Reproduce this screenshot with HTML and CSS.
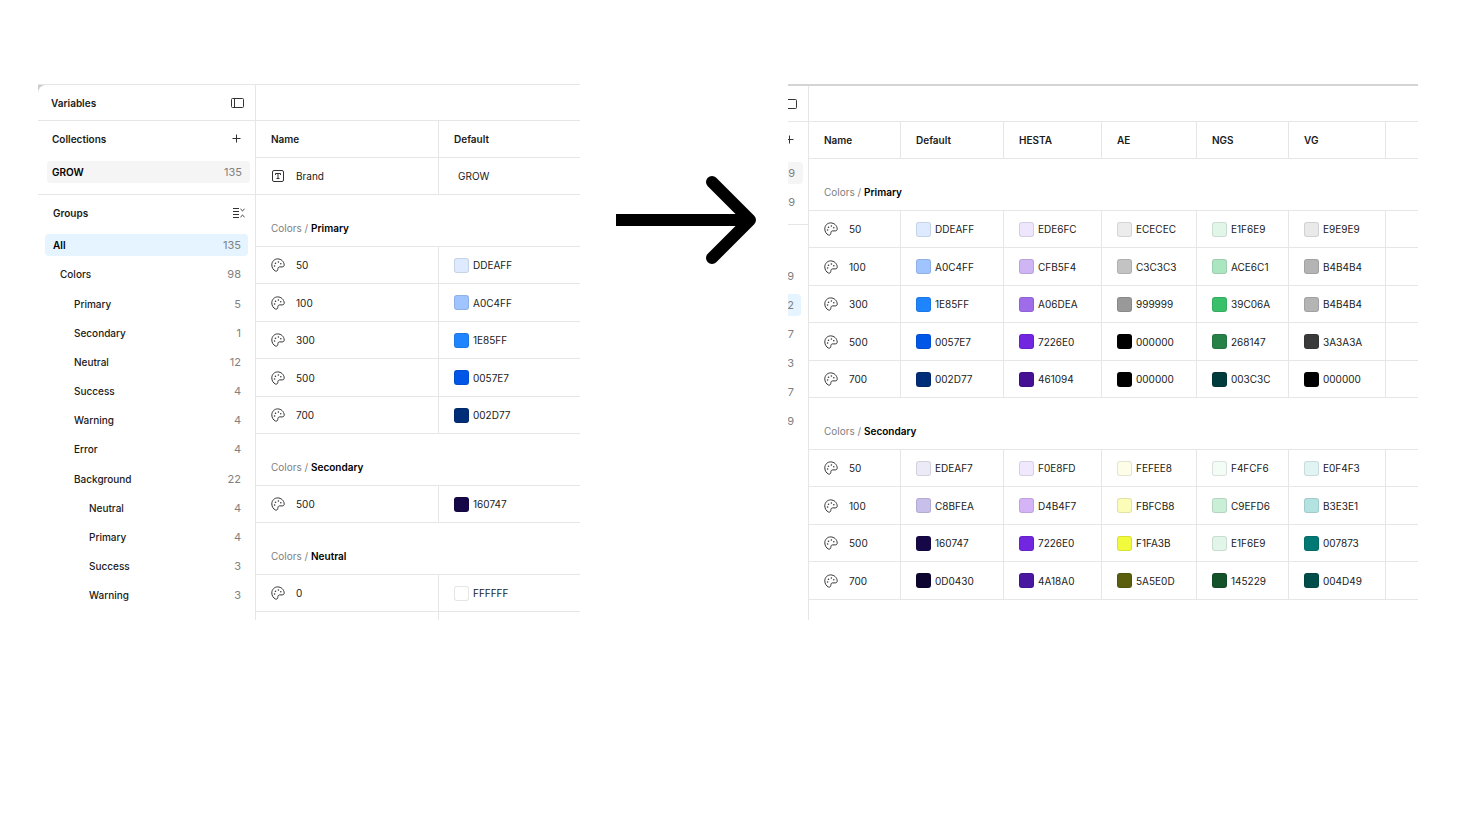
FILE: index.html
```
<!DOCTYPE html>
<html lang="en">
  <head>
    <meta charset="UTF-8" />
    <meta name="viewport" content="width=device-width, initial-scale=1.0" />
    <title>Variables</title>
    <link rel="stylesheet" href="styles.css">
  </head>
  <body>
    <!-- Shared icons -->
    <svg class="sprite" aria-hidden="true">
      <symbol id="icon-panel" viewBox="0 0 13 10">
        <rect x="0.5" y="0.5" width="12" height="9" rx="1" />
        <path d="M3.5 0.5v9" />
      </symbol>
      <symbol id="icon-plus" viewBox="0 0 9 9">
        <path d="M4.5 0.5v8M0.5 4.5h8" />
      </symbol>
      <symbol id="icon-collapse" viewBox="0 0 12 10">
        <path d="M0 0.5h6M0 3.5h6M0 6.5h6M0 9.5h6M7.5 1l2 1.8 2-1.8M7.5 9l2-1.8 2 1.8" />
      </symbol>
      <symbol id="icon-text" viewBox="0 0 14 14">
        <rect x="1.5" y="1.5" width="11" height="11" rx="1.5" />
        <path d="M4.5 6V4.5h5V6M7 4.5v5M5.5 9.5h3" />
      </symbol>
      <symbol id="icon-palette" viewBox="0 0 14 14">
        <path d="M6.6 0.9C3.300 0.9 0.8 3.600 0.8 6.900c0 2.700 1.500 5.100 3.600 6.100 1.200.5 2.300-.2 2.400-1.500l.1-1c.1-1 .8-1.600 1.800-1.600h2.600c1.200 0 2-.8 1.900-2C13 3.500 10.200 0.900 6.600 0.900z" />
        <g class="dots">
          <circle cx="3.600" cy="8" r="0.8" />
          <circle cx="4.500" cy="5.200" r="0.8" />
          <circle cx="7.400" cy="4" r="0.8" />
          <circle cx="9.800" cy="5.800" r="0.8" />
        </g>
      </symbol>
    </svg>

    <main class="compare">
      <section class="panel before">
        <aside class="sidebar">
          <div class="toolbar">
            <h2>Variables</h2>
            <button type="button" aria-label="Toggle sidebar"><svg class="icon-panel"><use href="#icon-panel" /></svg></button>
          </div>
          <div class="collections">
            <div class="heading">
              <h2>Collections</h2>
              <button type="button" aria-label="New collection"><svg class="icon-plus"><use href="#icon-plus" /></svg></button>
            </div>
            <ul>
              <li><a href="#" class="current">GROW <span>135</span></a></li>
            </ul>
          </div>
          <div class="groups">
            <div class="heading">
              <h2>Groups</h2>
              <button type="button" aria-label="Collapse groups"><svg class="icon-collapse"><use href="#icon-collapse" /></svg></button>
            </div>
            <ul>
              <li><a href="#" class="current">All <span>135</span></a></li>
              <li><a href="#" class="level-1">Colors <span>98</span></a></li>
              <li><a href="#" class="level-2">Primary <span>5</span></a></li>
              <li><a href="#" class="level-2">Secondary <span>1</span></a></li>
              <li><a href="#" class="level-2">Neutral <span>12</span></a></li>
              <li><a href="#" class="level-2">Success <span>4</span></a></li>
              <li><a href="#" class="level-2">Warning <span>4</span></a></li>
              <li><a href="#" class="level-2">Error <span>4</span></a></li>
              <li><a href="#" class="level-2">Background <span>22</span></a></li>
              <li><a href="#" class="level-3">Neutral <span>4</span></a></li>
              <li><a href="#" class="level-3">Primary <span>4</span></a></li>
              <li><a href="#" class="level-3">Success <span>3</span></a></li>
              <li><a href="#" class="level-3">Warning <span>3</span></a></li>
            </ul>
          </div>
        </aside>
        <div class="content">
          <div class="toolbar"></div>
          <table id="beforeTable">
            <colgroup>
              <col class="col-name">
              <col>
            </colgroup>
            <thead>
              <tr><th>Name</th><th>Default</th></tr>
            </thead>
            <tbody>
              <tr>
                <td><div class="cell"><svg class="icon"><use href="#icon-text" /></svg>Brand</div></td>
                <td class="text-value">GROW</td>
              </tr>
            </tbody>
          </table>
        </div>
      </section>

      <svg class="arrow" viewBox="0 0 140 90" role="img" aria-label="becomes">
        <path class="shaft" d="M0 45h132" />
        <path class="head" d="M96 7l38 38-38 38" />
      </svg>

      <section class="panel after">
        <aside class="sidebar">
          <div class="toolbar">
            <button type="button" aria-label="Toggle sidebar"><svg class="icon-panel"><use href="#icon-panel" /></svg></button>
          </div>
          <div class="collections">
            <div class="heading">
              <button type="button" aria-label="New collection"><svg class="icon-plus"><use href="#icon-plus" /></svg></button>
            </div>
            <ul>
              <li><a href="#" class="current"><span>9</span></a></li>
              <li><a href="#"><span>9</span></a></li>
            </ul>
          </div>
          <div class="groups">
            <div class="heading"></div>
            <ul>
              <li><a href="#"><span>9</span></a></li>
              <li><a href="#" class="current"><span>2</span></a></li>
              <li><a href="#"><span>7</span></a></li>
              <li><a href="#"><span>3</span></a></li>
              <li><a href="#"><span>7</span></a></li>
              <li><a href="#"><span>9</span></a></li>
            </ul>
          </div>
        </aside>
        <div class="content">
          <div class="toolbar"></div>
          <table id="afterTable">
            <colgroup>
              <col class="col-name">
              <col class="col-default">
              <col class="col-hesta">
              <col class="col-ae">
              <col class="col-ngs">
              <col class="col-vg">
              <col>
            </colgroup>
            <thead>
              <tr><th>Name</th><th>Default</th><th>HESTA</th><th>AE</th><th>NGS</th><th>VG</th><td></td></tr>
            </thead>
          </table>
        </div>
      </section>
    </main>

    <script>
      const before = {
        Primary: [
          ["50", "DDEAFF"],
          ["100", "A0C4FF"],
          ["300", "1E85FF"],
          ["500", "0057E7"],
          ["700", "002D77"],
        ],
        Secondary: [["500", "160747"]],
        Neutral: [["0", "FFFFFF"]],
      };

      const after = {
        Primary: [
          ["50", "DDEAFF", "EDE6FC", "ECECEC", "E1F6E9", "E9E9E9"],
          ["100", "A0C4FF", "CFB5F4", "C3C3C3", "ACE6C1", "B4B4B4"],
          ["300", "1E85FF", "A06DEA", "999999", "39C06A", "B4B4B4"],
          ["500", "0057E7", "7226E0", "000000", "268147", "3A3A3A"],
          ["700", "002D77", "461094", "000000", "003C3C", "000000"],
        ],
        Secondary: [
          ["50", "EDEAF7", "F0E8FD", "FEFEE8", "F4FCF6", "E0F4F3"],
          ["100", "C8BFEA", "D4B4F7", "FBFCB8", "C9EFD6", "B3E3E1"],
          ["500", "160747", "7226E0", "F1FA3B", "E1F6E9", "007873"],
          ["700", "0D0430", "4A18A0", "5A5E0D", "145229", "004D49"],
        ],
      };

      function colorCell(hex) {
        return `<td><div class="cell color"><span class="swatch" style="background-color: #${hex}"></span>${hex}</div></td>`;
      }

      // One tbody per colour group, with its title in the first row
      function renderGroups(tableId, groups, columns) {
        const table = document.getElementById(tableId);
        for (const [group, rows] of Object.entries(groups)) {
          const body = table.createTBody();
          let html = `<tr class="group"><th colspan="${columns}">Colors / <b>${group}</b></th></tr>`;
          for (const [name, ...values] of rows) {
            html += `<tr><td><div class="cell"><svg class="icon"><use href="#icon-palette" /></svg>${name}</div></td>`;
            html += values.map(colorCell).join("");
            // Fill the columns that have no mode yet
            html += "<td></td>".repeat(columns - values.length - 1);
            html += "</tr>";
          }
          body.innerHTML = html;
        }
      }

      renderGroups("beforeTable", before, 2);
      renderGroups("afterTable", after, 7);

      // Start of the next row, cut off by the panel
      document.querySelector("#beforeTable tbody:last-child").insertAdjacentHTML("beforeend", "<tr><td></td><td></td></tr>");
    </script>
  </body>
</html>
```
FILE: styles.css
```
* {
  box-sizing: border-box;
}
body {
  margin: 0;
  background-color: #fff;
  color: #1a1a1a;
  font-family: Inter, sans-serif;
  font-size: 10px;
  line-height: 16px;
}
.sprite {
  position: absolute;
  width: 0;
  height: 0;
}
svg {
  display: block;
  flex: none;
  fill: none;
  stroke: #333;
}
h2 {
  margin: 0;
  font-size: 10px;
  font-weight: 600;
}
ul {
  margin: 0;
  padding: 0;
  list-style: none;
}
button {
  margin-left: auto;
  padding: 0;
  border: none;
  background: none;
  cursor: pointer;
}

.compare {
  display: grid;
  grid-template-columns: 542fr 208px 630fr;
  align-items: start;
  padding: 84px 42px 0 38px;
}
.panel {
  display: flex;
  height: 536px;
  overflow: hidden;
}
.before {
  border-top: 1px solid #e6e6e6;
  background-color: #ccc;
}
.after {
  border-top: 2px solid #d4d4d4;
}
.arrow {
  width: 140px;
  height: 90px;
  margin: 91px 0 0 36px;
  stroke: #000;
  stroke-width: 12px;
}
.arrow .head {
  stroke-linecap: round;
  stroke-linejoin: round;
}

/* Sidebar */
.sidebar {
  flex: none;
  border-right: 1px solid #e6e6e6;
  background-color: #fff;
}
.before .sidebar {
  width: 218px;
  border-top-left-radius: 8px;
}
.after .sidebar {
  width: 21px;
}
.toolbar {
  display: flex;
  align-items: center;
  height: 36px;
  padding: 0 11px 0 13px;
  border-bottom: 1px solid #e6e6e6;
}
.heading {
  display: flex;
  align-items: center;
  height: 35px;
  margin-bottom: 4px;
}
.collections {
  padding: 0 5px 4px 9px;
  border-bottom: 1px solid #e6e6e6;
}
.collections .heading {
  margin-bottom: 5px;
  padding: 0 9px 0 5px;
}
.groups {
  padding: 0 7px;
}
.groups .heading {
  padding: 0 3px 0 8px;
}
.sidebar a {
  display: flex;
  justify-content: space-between;
  align-items: center;
  height: 22px;
  margin-bottom: 7px;
  padding: 0 7px 0 8px;
  border-radius: 4px;
  color: #1a1a1a;
  font-weight: 500;
  text-decoration: none;
}
.sidebar a span {
  color: #808080;
  font-size: 11px;
  font-weight: 400;
}
.sidebar .current {
  color: #000;
  font-weight: 600;
}
.collections a {
  padding: 0 8px 0 5px;
}
.collections .current {
  background-color: #f5f5f5;
}
.groups .current {
  background-color: #e5f4ff;
}
.before .groups li:nth-child(6n + 2) a {
  margin-bottom: 8px;
}
.sidebar .level-1 {
  padding-left: 15px;
}
.sidebar .level-2 {
  padding-left: 29px;
}
.sidebar .level-3 {
  padding-left: 44px;
}

.after .toolbar {
  justify-content: flex-end;
  padding: 0 11px 0 0;
}
.after .heading {
  justify-content: flex-end;
  margin-bottom: 5px;
}
.after .heading button,
.after .toolbar button {
  margin-left: 0;
}
.after .collections {
  padding-left: 0;
}
.after .groups {
  padding-left: 0;
}
.after .sidebar a {
  justify-content: flex-end;
  padding-left: 0;
  border-top-left-radius: 0;
  border-bottom-left-radius: 0;
}

.icon-panel {
  width: 13px;
  height: 10px;
}
.icon-plus {
  width: 9px;
  height: 9px;
}
.icon-collapse {
  width: 12px;
  height: 10px;
}
.icon {
  width: 14px;
  height: 14px;
}
.dots {
  fill: #333;
  stroke: none;
}

/* Variables table */
.content {
  flex: 1;
  min-width: 0;
  background-color: #fff;
}
table {
  width: 100%;
  table-layout: fixed;
  border-collapse: separate;
  border-spacing: 0;
}
th,
td {
  height: 37px;
  padding: 0 0 0 15px;
  border-right: 1px solid #e6e6e6;
  border-bottom: 1px solid #e6e6e6;
  text-align: left;
  font-weight: 600;
}
td {
  font-weight: 400;
}
tbody tr:nth-child(2n + 3) td {
  height: 38px;
}
tr > :last-child {
  border-right: none;
}
.group th {
  height: 52px;
  padding-bottom: 10px;
  vertical-align: bottom;
  color: #808080;
  font-weight: 400;
}
.group b {
  color: #000;
  font-weight: 600;
}
.text-value {
  padding-left: 19px;
}
.cell {
  display: flex;
  align-items: center;
  gap: 11px;
}
.color {
  gap: 4px;
}
.swatch {
  width: 15px;
  height: 15px;
  border: 1px solid rgba(0, 0, 0, 0.1);
  border-radius: 3px;
}

.before .col-name {
  width: 183px;
}
.after .col-name {
  width: 92px;
}
.col-default {
  width: 103px;
}
.col-hesta {
  width: 98px;
}
.col-ae {
  width: 95px;
}
.col-ngs {
  width: 92px;
}
.col-vg {
  width: 97px;
}
```
